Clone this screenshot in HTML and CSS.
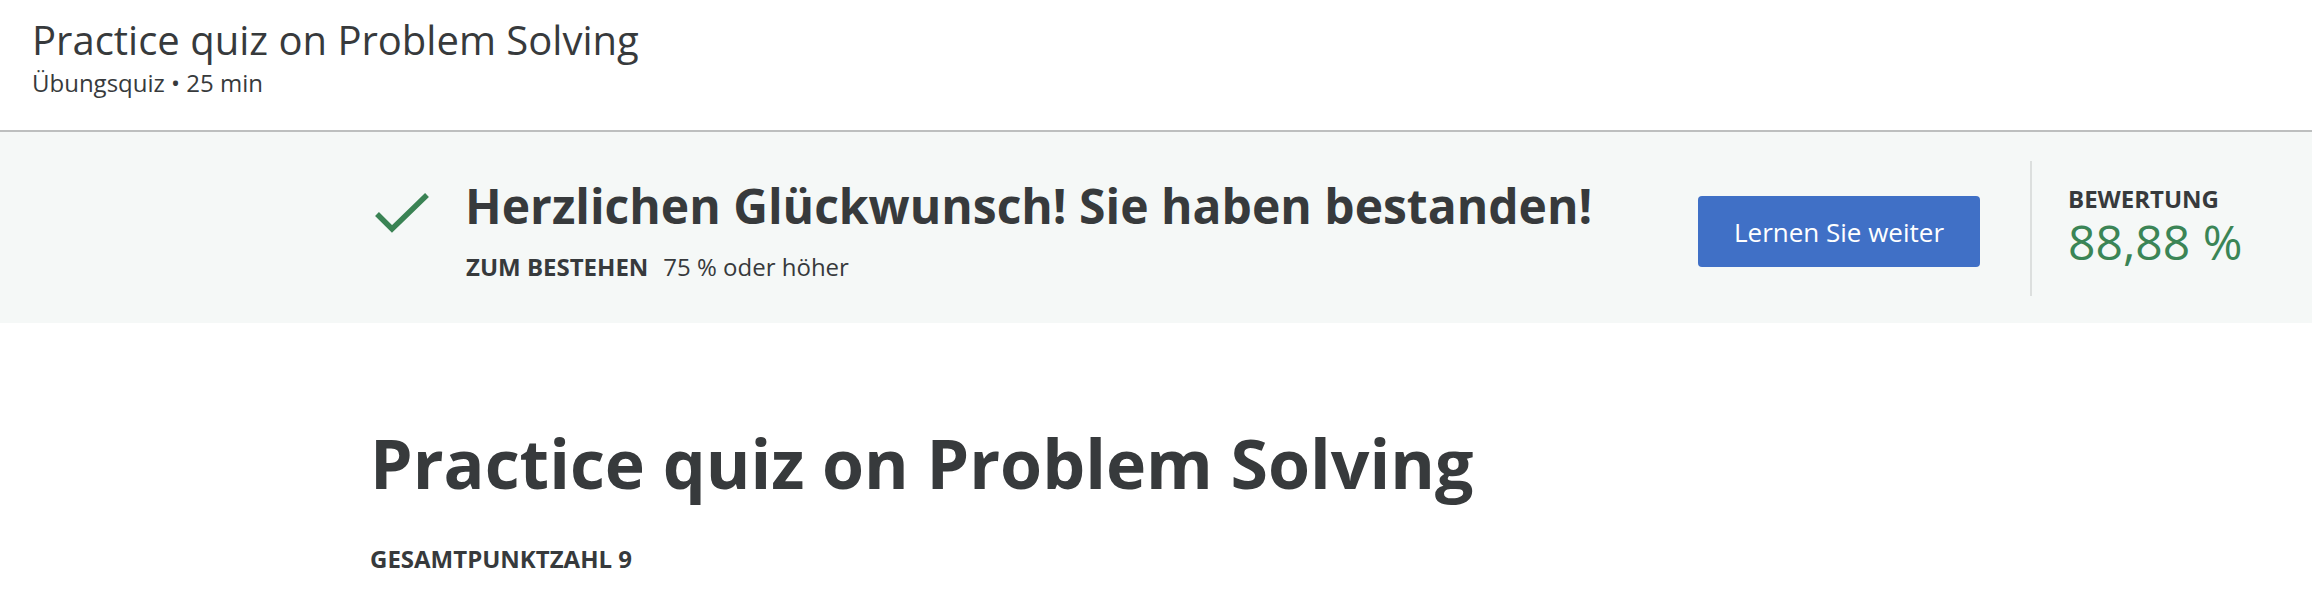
FILE: index.html
```html
<!DOCTYPE html>
<html lang="de">
<head>
<meta charset="utf-8">
<title>Practice quiz on Problem Solving</title>
<link rel="stylesheet" href="styles.css">
</head>
<body>
<header class="page-header">
  <h2 class="header-title">Practice quiz on Problem Solving</h2>
  <div class="header-meta">Übungsquiz • 25 min</div>
</header>
<section class="result-banner">
  <div class="result-main">
    <svg class="check-icon" width="60" height="48" viewBox="0 0 60 48" aria-hidden="true">
      <path d="M4 21 L19 36 L54 2" fill="none" stroke="#3a8354" stroke-width="5.5" stroke-linecap="butt" stroke-linejoin="miter"/>
    </svg>
    <div class="result-text">
      <h1 class="result-title">Herzlichen Glückwunsch! Sie haben bestanden!</h1>
      <div class="result-pass"><span class="label">ZUM BESTEHEN</span><span class="pass-value">75 % oder höher</span></div>
    </div>
  </div>
  <button class="continue-btn" type="button">Lernen Sie weiter</button>
  <div class="score">
    <div class="label">BEWERTUNG</div>
    <div class="score-value">88,88 %</div>
  </div>
</section>
<main class="content">
  <h1 class="quiz-title">Practice quiz on Problem Solving</h1>
  <div class="label total">GESAMTPUNKTZAHL 9</div>
</main>
</body>
</html>
```

FILE: styles.css
```css
* { box-sizing: border-box; }
body {
  margin: 0;
  font-family: "Open Sans", "Noto Sans", sans-serif;
  color: #373a3c;
  background: #ffffff;
}
.page-header {
  padding: 16px 32px 0;
  border-bottom: 2px solid #bdbfbf;
  height: 132px;
}
.header-title {
  margin: 0;
  font-size: 40px;
  line-height: 48px;
  font-weight: 400;
}
.header-meta {
  margin-top: 4px;
  font-size: 24px;
  line-height: 30px;
}
.result-banner {
  background: #f5f8f7;
  height: 191px;
  display: flex;
  align-items: center;
  padding-left: 373px;
}
.result-main {
  width: 1325px;
  flex: 0 0 auto;
  display: flex;
  align-items: flex-start;
  align-self: flex-start;
  padding-top: 44px;
}
.check-icon {
  margin-top: 17px;
  margin-right: 32px;
  flex: 0 0 auto;
}
.result-title {
  margin: 0;
  font-size: 48px;
  line-height: 60px;
  font-weight: 700;
}
.result-pass {
  margin-top: 16px;
  font-size: 24px;
  line-height: 30px;
  padding-left: 1px;
}
.label {
  font-weight: 700;
  text-transform: uppercase;
}
.result-pass .label { margin-right: 15px; }
.continue-btn {
  flex: 0 0 auto;
  width: 282px;
  height: 71px;
  background: #4070c6;
  color: #ffffff;
  border: none;
  border-radius: 4px;
  font-family: inherit;
  font-size: 26px;
  margin-top: 8px;
}
.score {
  margin-left: 50px;
  border-left: 2px solid #dcdfde;
  height: 135px;
  padding-left: 36px;
  margin-top: 2px;
}
.score .label {
  font-size: 24px;
  line-height: 24px;
  margin-top: 26px;
}
.score-value {
  margin-top: 7px;
  font-size: 48px;
  line-height: 48px;
  color: #3b8556;
}
.content {
  padding-left: 370px;
}
.quiz-title {
  margin: 98px 0 0;
  font-size: 68px;
  line-height: 84px;
  font-weight: 700;
}
.total {
  margin-top: 40px;
  font-size: 24px;
  line-height: 28px;
}
```
